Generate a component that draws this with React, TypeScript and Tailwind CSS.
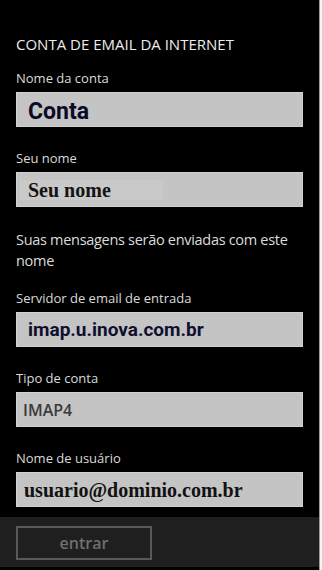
const sans = { fontFamily: '"Open Sans", "Noto Sans", sans-serif' };

type FieldProps = {
  label: string;
  value: string;
  valueClass: string;
  className?: string;
};

function Field({ label, value, valueClass, className = "" }: FieldProps) {
  return (
    <div className={className}>
      <div className="text-[13px] leading-[18px] text-[#dadada]">{label}</div>
      <div className="mt-[5px] flex h-[35px] items-center border border-[#d2d2d2] bg-[#c4c4c4]">
        <span className={valueClass}>{value}</span>
      </div>
    </div>
  );
}

export default function App() {
  return (
    <div className="flex h-[570px] w-[322px] overflow-hidden bg-black" style={sans}>
      {/* main panel */}
      <div className="flex w-[319px] flex-col bg-black">
        <div className="px-4 pt-[34px]">
          <h1 className="text-[15px] font-medium leading-[20px] text-[#ececec]">CONTA DE EMAIL DA INTERNET</h1>

          <Field
            className="mt-[15px]"
            label="Nome da conta"
            value="Conta"
            valueClass="pl-[11px] pt-[3px] font-['Roboto',sans-serif] text-[23px] font-bold leading-none text-[#0b0b26]"
          />

          <Field
            className="mt-[22px]"
            label="Seu nome"
            value="Seu nome"
            valueClass="ml-[2px] bg-[#c9c9c9] pl-[9px] pr-[52px] font-['Liberation_Serif',serif] text-[20px] font-bold leading-none text-[#141414]"
          />

          <p className="mt-[22px] text-[14.5px] leading-[21px] tracking-[-0.3px] text-[#dcdcdc]">
            Suas mensagens serão enviadas com este nome
          </p>

          <Field
            className="mt-[18px]"
            label="Servidor de email de entrada"
            value="imap.u.inova.com.br"
            valueClass="pl-[11px] font-['Roboto',sans-serif] text-[19px] font-bold leading-none text-[#0f0f2e]"
          />

          <Field
            className="mt-[22px]"
            label="Tipo de conta"
            value="IMAP4"
            valueClass="pl-[6px] text-[16px] font-semibold leading-none text-[#3a3a3a]"
          />

          <Field
            className="mt-[22px]"
            label="Nome de usuário"
            value="usuario@dominio.com.br"
            valueClass="pl-[7px] font-['Liberation_Serif',serif] text-[20px] font-bold leading-none text-[#111111]"
          />
        </div>

        {/* app bar */}
        <div className="mt-auto mb-[3px] h-[50px] bg-[#1f1f1f] px-4 pt-[9px]">
          <button className="flex h-[34px] w-[136px] items-center justify-center border-2 border-[#595959] text-[16px] font-semibold text-[#6f6f6f]">
            entrar
          </button>
        </div>
      </div>

      {/* page edge */}
      <div className="w-[3px] border-l border-[#9a9a9a] bg-[#f4f4f4]" />
    </div>
  );
}
